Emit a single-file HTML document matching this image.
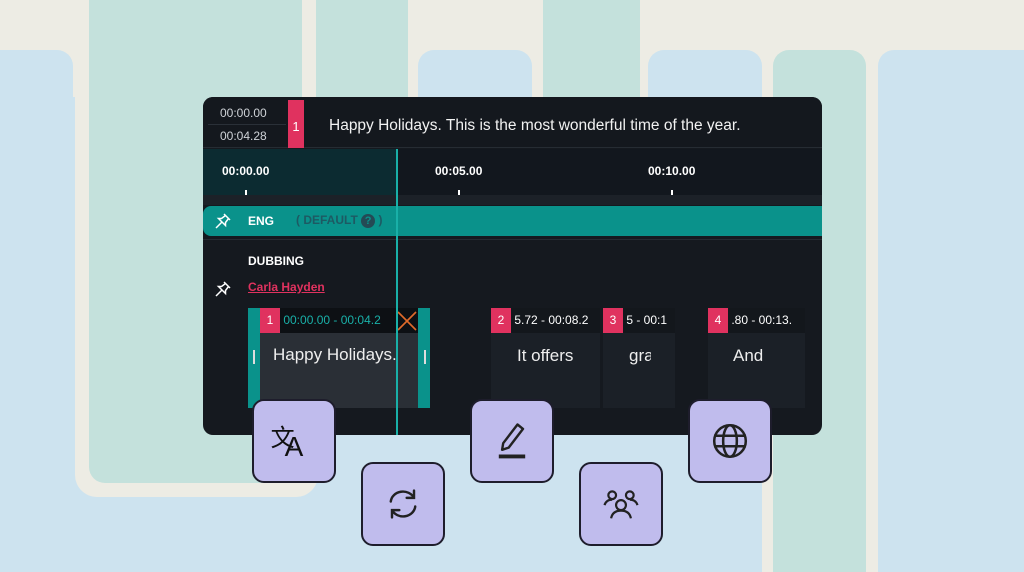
<!DOCTYPE html><html><head><style>
*{margin:0;padding:0;box-sizing:border-box}
body{width:1024px;height:572px;overflow:hidden;background:#edece4;position:relative;font-family:"Liberation Sans","DejaVu Sans",sans-serif}
.a{position:absolute}
.bl{background:#cde3ef}.gr{background:#c4e1dc}
.btn{position:absolute;width:84px;height:84px;background:#c0bced;border:2px solid #1e1d2c;border-radius:12px;display:flex;align-items:center;justify-content:center}
.clip{position:absolute;top:308px;height:100px;background:#1b2027}
.hd{height:25px;background:#13171c;color:#fff;font-size:12px;line-height:25px;white-space:nowrap;overflow:hidden}
.num{display:inline-block;width:20px;height:25px;background:#e0325f;color:#fff;text-align:center;font-size:12px}
.ct{position:absolute;top:38px;color:#eee;font-size:17px;white-space:nowrap;overflow:hidden}
</style></head><body>
<div class="a bl" style="left:0;top:97px;width:762px;height:475px"></div>
<div class="a bl" style="left:0;top:50px;width:73px;height:522px;border-radius:0 16px 0 0"></div>
<div class="a bl" style="left:418px;top:50px;width:114px;height:100px;border-radius:16px 16px 0 0"></div>
<div class="a bl" style="left:648px;top:50px;width:114px;height:100px;border-radius:16px 16px 0 0"></div>
<div class="a gr" style="left:773px;top:50px;width:93px;height:522px;border-radius:16px 16px 0 0"></div>
<div class="a bl" style="left:878px;top:50px;width:146px;height:522px;border-radius:16px 0 0 0"></div>
<div class="a" style="left:75px;top:0;width:243px;height:497px;background:#edece4;border-radius:0 0 22px 22px"></div>
<div class="a gr" style="left:89px;top:0;width:213px;height:483px;border-radius:0 0 16px 16px"></div>
<div class="a gr" style="left:316px;top:0;width:92px;height:120px"></div>
<div class="a gr" style="left:543px;top:0;width:97px;height:120px"></div>

<div class="a" style="left:203px;top:97px;width:619px;height:338px;background:#15191f;border-radius:10px;overflow:hidden">
 <div class="a" style="left:0;top:0;width:619px;height:51px;background:#14181e;border-bottom:1px solid #262c33"></div>
 <div class="a" style="left:17px;top:9px;color:#cfd3d8;font-size:12px">00:00.00</div>
 <div class="a" style="left:5px;top:27px;width:78px;height:1px;background:#2a3038"></div>
 <div class="a" style="left:17px;top:32px;color:#cfd3d8;font-size:12px">00:04.28</div>
 <div class="a" style="left:85px;top:3px;width:16px;height:48px;background:#e0325f;color:#fff;font-size:13px;text-align:center;line-height:54px">1</div>
 <div class="a" style="left:126px;top:20px;color:#f2f2f2;font-size:15.5px">Happy Holidays. This is the most wonderful time of the year.</div>
 <div class="a" style="left:0;top:52px;width:194px;height:46px;background:#0c2b31"></div>
 <div class="a" style="left:194px;top:52px;width:425px;height:46px;background:#12171e"></div>
 <div class="a" style="left:19px;top:67px;color:#fff;font-size:12px;font-weight:bold">00:00.00</div>
 <div class="a" style="left:232px;top:67px;color:#fff;font-size:12px;font-weight:bold">00:05.00</div>
 <div class="a" style="left:445px;top:67px;color:#fff;font-size:12px;font-weight:bold">00:10.00</div>
 <div class="a" style="left:42px;top:93px;width:2px;height:5px;background:#fff"></div>
 <div class="a" style="left:255px;top:93px;width:2px;height:5px;background:#fff"></div>
 <div class="a" style="left:468px;top:93px;width:2px;height:5px;background:#fff"></div>
 <div class="a" style="left:0;top:98px;width:619px;height:10px;background:#1c2128"></div>
 <div class="a" style="left:0;top:109px;width:619px;height:30px;background:#0a928b;border-radius:8px 0 0 8px"></div>
 <svg class="a" style="left:10px;top:114px" width="20" height="20" viewBox="0 0 20 20" fill="none" stroke="#fff" stroke-width="1.5"><path d="M11 3l6 6M12.5 4.5l-4 3-3 0 7 7 0-3 3-4M8.5 11.5L3 17"/></svg>
 <div class="a" style="left:45px;top:117px;color:#fff;font-size:12px;font-weight:bold">ENG</div>
 <div class="a" style="left:93px;top:116px;color:#1d5a63;font-size:12px;font-weight:bold">( DEFAULT <span style="display:inline-block;width:14px;height:14px;border-radius:7px;background:#244a55;color:#0a928b;text-align:center;font-size:11px;line-height:14px">?</span> )</div>
 <div class="a" style="left:0;top:142px;width:619px;height:1px;background:#262c33"></div>
 <div class="a" style="left:45px;top:157px;color:#fff;font-size:12px;font-weight:bold">DUBBING</div>
 <div class="a" style="left:45px;top:183px;color:#e0325f;font-size:12px;font-weight:bold;text-decoration:underline">Carla Hayden</div>
 <svg class="a" style="left:10px;top:182px" width="20" height="20" viewBox="0 0 20 20" fill="none" stroke="#fff" stroke-width="1.5"><path d="M11 3l6 6M12.5 4.5l-4 3-3 0 7 7 0-3 3-4M8.5 11.5L3 17"/></svg>
</div>

<div class="a" style="left:248px;top:308px;width:182px;height:100px;background:#0a928b"></div>
<div class="a" style="left:260px;top:308px;width:158px;height:100px;background:#2a2f36">
 <div class="hd" style="background:#0d1014;color:#19b0a8"><span class="num">1</span> 00:00.00 - 00:04.2</div>
 <div class="a" style="left:0;top:37px;color:#eee;font-size:17px;padding-left:13px;white-space:nowrap">Happy Holidays.</div>
</div>
<svg class="a" style="left:396px;top:310px" width="22" height="22" viewBox="0 0 22 22" stroke="#e06a2a" stroke-width="1.6"><path d="M2 2L20 20M20 2L2 20"/></svg>
<div class="a" style="left:253px;top:350px;width:2px;height:14px;background:#ddd"></div>
<div class="a" style="left:424px;top:350px;width:2px;height:14px;background:#ddd"></div>

<div class="clip" style="left:491px;width:109px"><div class="hd"><span class="num">2</span> 5.72 - 00:08.2</div><div class="ct" style="left:26px;width:58px">It offers</div></div>
<div class="clip" style="left:603px;width:72px"><div class="hd"><span class="num">3</span> 5 - 00:1</div><div class="ct" style="left:26px;width:22px">gra</div></div>
<div class="clip" style="left:708px;width:97px"><div class="hd"><span class="num">4</span> .80 - 00:13.</div><div class="ct" style="left:25px;width:34px">And th</div></div>

<div class="a" style="left:396px;top:149px;width:2px;height:286px;background:#19b0a8"></div>

<div class="btn" style="left:252px;top:399px"><span style="font-family:'Noto Sans CJK SC',sans-serif;font-size:24px;color:#111;position:relative;top:-6px;left:-2px">文</span><span style="font-size:28px;color:#111;position:relative;top:6px;left:-12px">A</span></div>
<div class="btn" style="left:361px;top:462px"><svg width="44" height="44" viewBox="0 0 36 36" fill="none" stroke="#222" stroke-width="2" stroke-linecap="round"><path d="M8 16a10 9 0 0 1 19-3M27 7v6h-6M28 20a10 9 0 0 1-19 3M9 29v-6h6"/></svg></div>
<div class="btn" style="left:470px;top:399px"><svg width="44" height="44" viewBox="0 0 40 40" fill="none" stroke="#222" stroke-width="2.2" stroke-linejoin="round"><path d="M25 5l5 4-13 17-6 2 1-6z"/><path d="M8 34h24" stroke-width="3.5"/></svg></div>
<div class="btn" style="left:579px;top:462px"><svg width="44" height="44" viewBox="0 0 40 40" fill="none" stroke="#222" stroke-width="2"><circle cx="20" cy="21" r="4.5"/><path d="M11 33c1-5 4-7 9-7s8 2 9 7"/><circle cx="12" cy="12" r="3.5"/><circle cx="28" cy="12" r="3.5"/><path d="M5 21c1-3 3-5 7-5M35 21c-1-3-3-5-7-5"/></svg></div>
<div class="btn" style="left:688px;top:399px"><svg width="40" height="40" viewBox="0 0 38 38" fill="none" stroke="#222" stroke-width="2.4"><circle cx="19" cy="19" r="15"/><ellipse cx="19" cy="19" rx="6.5" ry="15"/><path d="M4 14h30M4 24h30"/></svg></div>
</body></html>
